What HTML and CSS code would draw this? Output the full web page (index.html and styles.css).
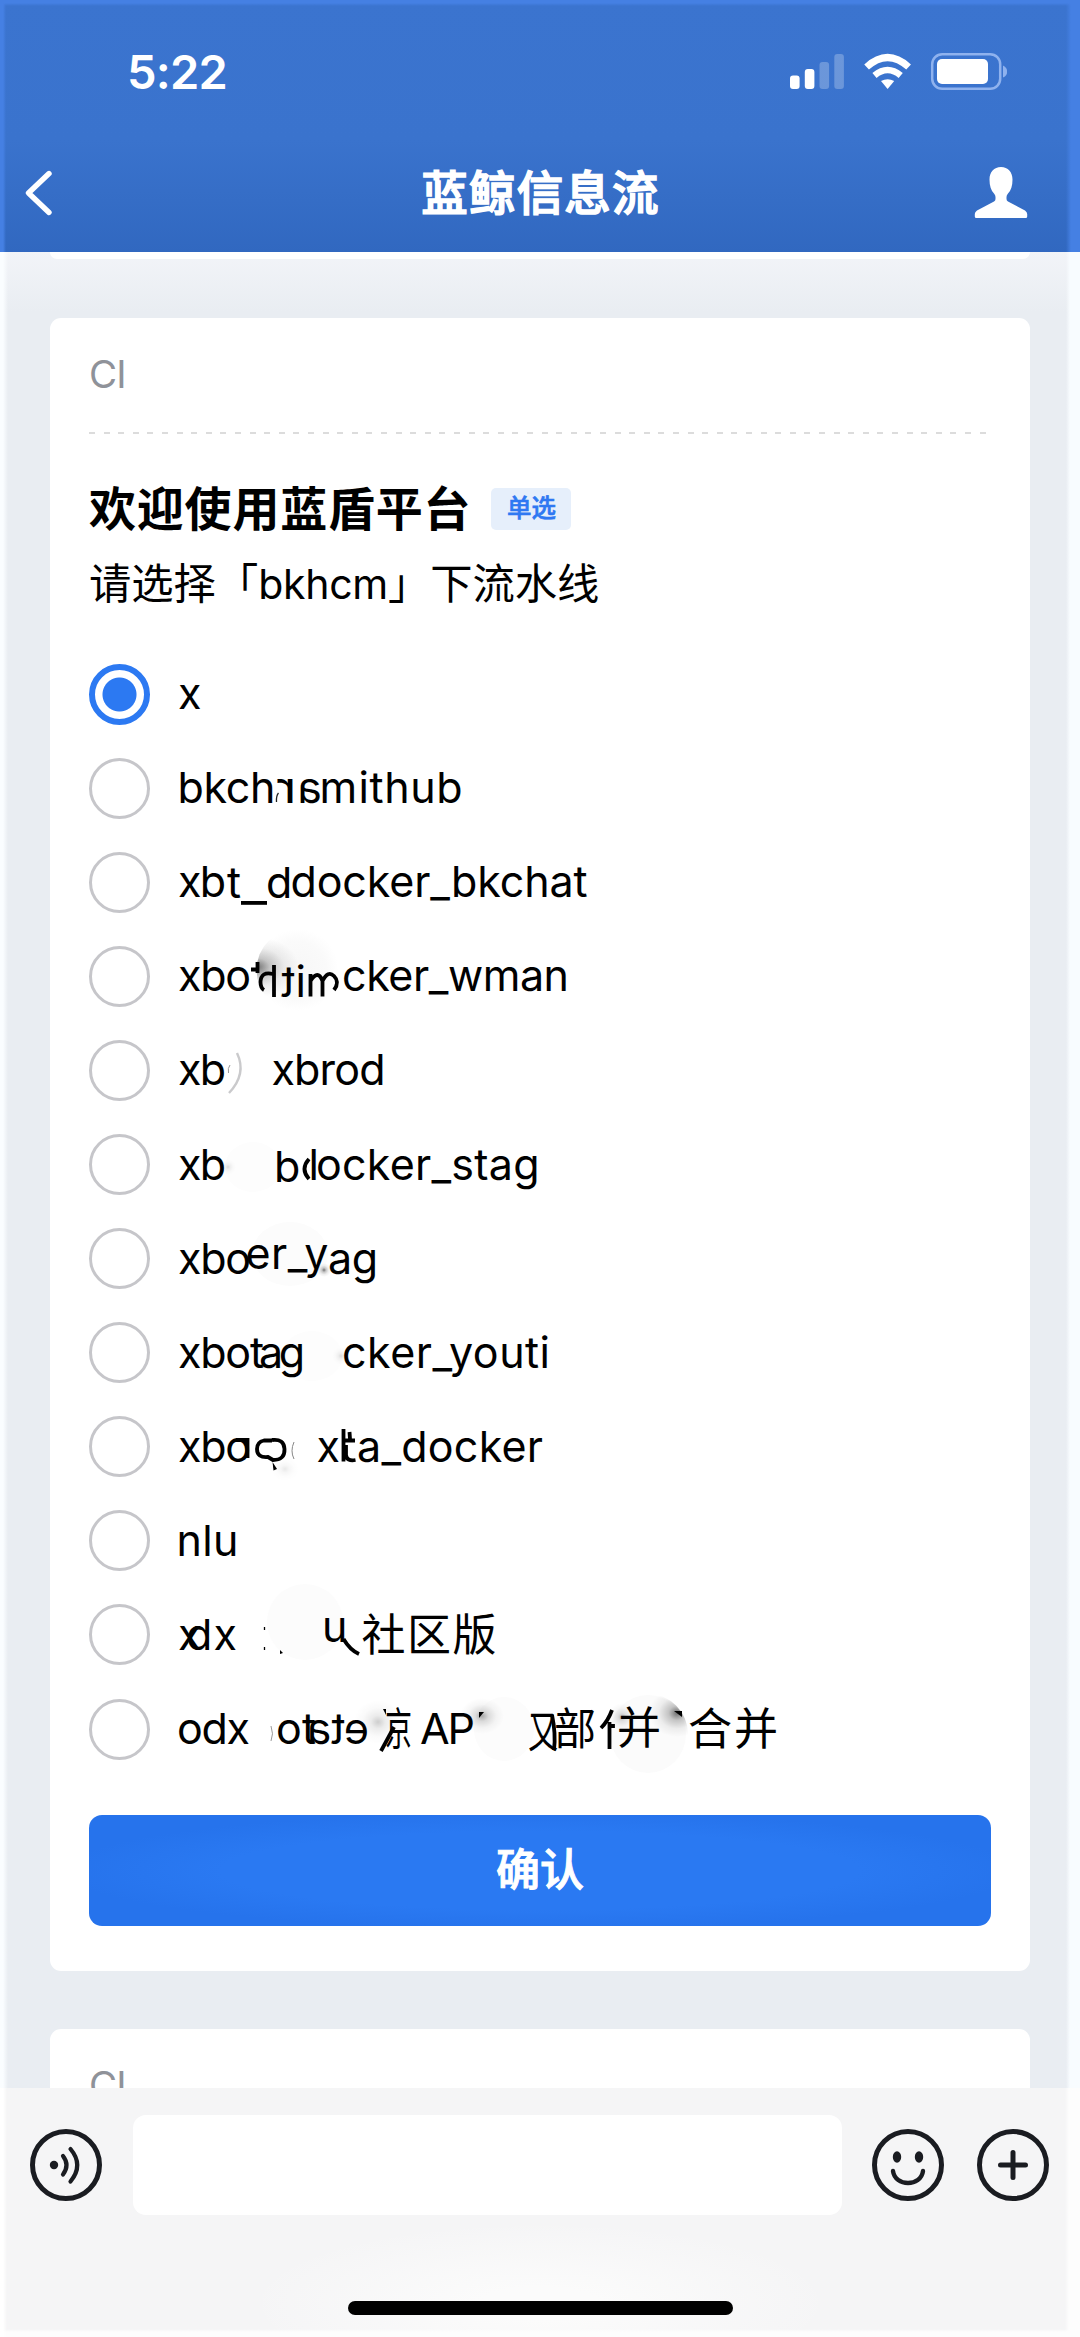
FILE: index.html
```html
<!DOCTYPE html>
<html lang="zh-CN">
<head>
<meta charset="utf-8">
<title>蓝鲸信息流</title>
<link rel="stylesheet" href="styles.css">
</head>
<body>
<div class="screen">
  <header class="header">
    <div class="status">
      <span class="clock">5:22</span>
      <svg class="status-icons" width="220" height="40" viewBox="0 0 220 40">
        <g fill="#fff">
          <rect x="2" y="23.5" width="9.6" height="13.5" rx="3"/>
          <rect x="16.8" y="17" width="9.6" height="20" rx="3"/>
          <rect x="31.5" y="10" width="9.6" height="27" rx="3" opacity=".25"/>
          <rect x="46.3" y="2" width="9.6" height="35" rx="3" opacity=".25"/>
          <path d="M93 29 Q99.600 25.500 106.200 29 L99.600 37Z"/>
        </g>
        <g fill="none" stroke="#fff" stroke-width="7">
          <path d="M78.600 15 Q99.600 -4 120.600 15" stroke-width="7"/>
          <path d="M86.500 23.500 Q99.600 12.500 112.700 23.500" stroke-width="6.500"/>
        </g>
        <rect x="144.200" y="2.200" width="68" height="34.500" rx="10" fill="none" stroke="#8fb2ee" stroke-width="2.500"/>
        <rect x="149" y="7" width="51" height="25" rx="5" fill="#fff"/>
        <path d="M215 13.500 Q219.500 16 219 19.500 Q219.500 23.500 215 25.500Z" fill="#8fb2ee"/>
      </svg>
    </div>
    <nav class="nav">
      <svg width="32" height="50" viewBox="0 0 32 50" fill="none" stroke="#fff" stroke-width="5.400" stroke-linecap="round" stroke-linejoin="round"><path d="M26 5.500 L5.500 25 L26 44.500"/></svg>
      <h1 class="nav-title">蓝鲸信息流</h1>
      <svg width="54" height="52" viewBox="0 0 54 52" fill="#fff"><path d="M27 0C34 0 38.500 5 38.500 12.500C38.500 19 37 23.500 34 26.500Q32.500 28 32.500 30V32Q32.500 33.500 34 34.500L51 43.500Q53.200 45 53.200 47V49.500Q53.200 51 51.700 51H2.300Q.8 51 .8 49.500V47Q.8 45 3 43.500L20 34.500Q21.500 33.500 21.500 32V30Q21.500 28 20 26.500C17 23.500 15.500 19 15.500 12.500C15.500 5 20 0 27 0Z"/></svg>
    </nav>
  </header>

  <main class="feed">
    <div class="card card-prev"></div>
    <section class="card card-main">
      <div class="source">CI</div>
      <div class="divider"></div>
      <div class="title-row"><h2 class="title">欢迎使用蓝盾平台</h2><span class="tag">单选</span></div>
      <p class="subtitle">请选择「<span class="latin">bkhcm</span>」下流水线</p>
      <ul class="options">
        <li class="option"><i class="radio checked"></i>
          <svg class="label"><text x="8" y="61.500">x</text></svg></li>
        <li class="option"><i class="radio"></i>
          <svg class="label">
            <text x="7.500" y="61.500" textLength="98">bkch</text>
            <text transform="translate(126.500 61.500) scale(-1.250 1)">r</text>
            <path d="M108.500 52Q106 55 106.500 61" fill="none" stroke="#222" stroke-width="1.300"/>
            <text transform="translate(151.500 61.500) scale(-1 1)">a</text>
            <text x="149.500" y="61.500">m</text>
            <text x="188.500" y="61.500" textLength="104">ithub</text>
          </svg></li>
        <li class="option"><i class="radio"></i>
          <svg class="label">
            <text x="8" y="61.500" textLength="48">xb</text>
            <text x="57" y="62.500">t</text>
            <rect class="ink" x="71" y="66" width="26" height="3.800"/>
            <text x="96" y="63">d</text>
            <text x="120.500" y="61.500" textLength="297">docker_bkchat</text>
          </svg></li>
        <li class="option"><i class="radio"></i>
          <svg class="label">
            <defs>
              <radialGradient id="smudge"><stop offset="0" stop-color="#f7f7f7"/><stop offset=".7" stop-color="#fafafa"/><stop offset="1" stop-color="#fff"/></radialGradient>
              <radialGradient id="shade"><stop offset="0" stop-color="#000" stop-opacity=".55"/><stop offset=".3" stop-color="#000" stop-opacity=".22"/><stop offset=".65" stop-color="#000" stop-opacity=".06"/><stop offset="1" stop-color="#000" stop-opacity="0"/></radialGradient>
              <clipPath id="disc"><circle cx="127.500" cy="41" r="41"/></clipPath>
              <clipPath id="disc-left"><circle cx="478" cy="52" r="40"/></clipPath>
            </defs>
            <circle cx="127.500" cy="41" r="41" fill="url(#smudge)"/>
            <ellipse cx="87" cy="38" rx="42" ry="30" fill="url(#shade)" clip-path="url(#disc)"/>
            <text x="8" y="61.500" textLength="73">xbo</text>
            <path class="stroke" d="M81 40.500H88M87.500 33V44"/>
            <path class="stroke" d="M104 36V68M103 45Q91 42 90.500 53Q90.500 59 94 61"/>
            <text transform="translate(124.500 67.500) scale(-1 1)">t</text>
            <text x="125.500" y="67.500">i</text>
            <path class="stroke" d="M140.500 67.500V45M140.500 52Q148 40 152.500 52V67.500M152.500 52Q158 41 164 47Q170 53 164 61"/>
            <text x="172" y="61.500" textLength="227">cker_wman</text>
          </svg></li>
        <li class="option"><i class="radio"></i>
          <svg class="label">
            <text x="8" y="61.500" textLength="48">xb</text>
            <path d="M67 30Q77 51 59 70" fill="none" stroke="#cacacc" stroke-width="2.400"/>
            <path d="M60 42Q57.500 45 58.500 50" fill="none" stroke="#999" stroke-width="1"/>
            <text x="101.500" y="61.500" textLength="114">xbrod</text>
          </svg></li>
        <li class="option"><i class="radio"></i>
          <svg class="label">
            <ellipse cx="83" cy="49" rx="28" ry="25" fill="#fdfdfd"/>
            <ellipse cx="58" cy="49" rx="8" ry="8" fill="url(#shade)" opacity=".25"/>
            <text x="8" y="61.500" textLength="48">xb</text>
            <text x="104" y="63.500">b</text>
            <path class="stroke" d="M139 41Q130 51 139 61"/>
            <text x="138.500" y="61.500">l</text>
            <text x="146" y="61.500" textLength="223.500">ocker_stag</text>
          </svg></li>
        <li class="option"><i class="radio"></i>
          <svg class="label">
            <ellipse cx="120" cy="42" rx="38" ry="32" fill="#fcfcfc"/>
            <ellipse cx="154" cy="58" rx="7" ry="7" fill="url(#shade)"/>
            <text x="8" y="61.500" textLength="73">xbo</text>
            <text x="75.500" y="57" textLength="83">er_y</text>
            <text x="158" y="61.500" textLength="50">ag</text>
          </svg></li>
        <li class="option"><i class="radio"></i>
          <svg class="label">
            <ellipse cx="142" cy="50" rx="30" ry="25" fill="#fdfdfd"/>
            <text x="8" y="61.500" textLength="86">xbot</text>
            <text x="89" y="61.500" textLength="46">ag</text>
            <ellipse cx="171" cy="50" rx="9" ry="9" fill="url(#shade)" opacity=".25"/>
            <text x="172" y="61.500" textLength="208">cker_youti</text>
          </svg></li>
        <li class="option"><i class="radio"></i>
          <svg class="label">
            <ellipse cx="115" cy="69" rx="14" ry="12" fill="url(#shade)" opacity=".16"/>
            <text x="8" y="61.500" textLength="73">xbo</text>
            <path class="stroke" d="M66 40H77.500V58"/>
            <path class="stroke" d="M102 40.500H94Q87 42 87 49Q87 58 98 57L103 60Q115 60 114.500 49Q114 38.500 102 40"/>
            <path class="ink" d="M102.500 62L107 69L103.500 70.500Z"/>
            <path d="M124 42Q120 51 124 59" fill="none" stroke="#888"/>
            <text x="146.500" y="61.500">x</text>
            <path class="stroke" d="M173.500 29V61.500M174 40.500H185M176 45V55Q176.500 61.500 185.500 60M179.500 32L180 39"/>
            <text x="187" y="61.500" textLength="186">a_docker</text>
          </svg></li>
        <li class="option"><i class="radio"></i>
          <svg class="label"><text x="6.500" y="61.500" textLength="62">nlu</text></svg></li>
        <li class="option"><i class="radio"></i>
          <svg class="label">
            <circle cx="135" cy="34" r="38" fill="#fcfcfc"/>
            <text x="8" y="61.500">x</text><text x="16" y="61.500">d</text><text x="43.500" y="61.500">x</text>
            <path d="M94.500 39V42M94.500 59V62" stroke="#000" stroke-width="1.300"/>
            <path class="ink" d="M110 62L113 65L110 66Z"/>
            <text x="152" y="53.500">u</text>
            <path class="stroke" d="M173.500 51Q180 62 189 66"/>
            <text class="han" x="191.500" y="63" textLength="135">社区版</text>
          </svg></li>
        <li class="option"><i class="radio"></i>
          <svg class="label">
            <ellipse cx="208" cy="40" rx="24" ry="22" fill="url(#shade)" opacity=".35"/>
            <ellipse cx="334" cy="47" rx="30" ry="32" fill="#fcfcfc"/>
            <ellipse cx="312" cy="34" rx="22" ry="18" fill="url(#shade)" opacity=".6"/>
            <ellipse cx="478" cy="52" rx="38" ry="39" fill="#fbfbfb"/>
            <ellipse cx="507" cy="31" rx="28" ry="24" fill="url(#shade)" clip-path="url(#disc-left)"/>
            <ellipse cx="452" cy="35" rx="14" ry="14" fill="url(#shade)" opacity=".5"/>
            <text x="7" y="61.500" textLength="73">odx</text>
            <path d="M101 44Q104 52 101 59" fill="none" stroke="#999"/>
            <text x="106" y="61.500">o</text><text x="132" y="61.500">t</text>
            <text transform="translate(161 61.500) scale(-1 1)">a</text>
            <text transform="translate(174.500 61.500) scale(-1 1)">t</text>
            <text transform="translate(199 61.500) scale(-1 1)">e</text>
            <path class="stroke" d="M224 45L211 69"/><path class="ink" d="M213 27H216V33Z"/>
            <text class="han" x="215" y="63" textLength="27" lengthAdjust="spacingAndGlyphs">京</text>
            <text x="250" y="61.500" textLength="55">AP</text>
            <path class="ink" d="M309 30H314L309 36Z"/>
            <text class="han" x="358" y="66" textLength="30" lengthAdjust="spacingAndGlyphs">又</text>
            <path class="stroke" d="M382 33Q386 52 384 68"/>
            <text class="han" x="384" y="63" textLength="42" lengthAdjust="spacingAndGlyphs">部</text>
            <path class="stroke" d="M442 28Q438 39 431 46M439.500 40V67M443 46V42"/>
            <text class="han" x="447" y="62">并</text>
            <path class="ink" d="M504 29H512V35Z"/>
            <text class="han" x="518" y="63" textLength="90">合并</text>
          </svg></li>
      </ul>
      <button class="confirm">确认</button>
    </section>
    <section class="card card-next"><div class="source">CI</div></section>
  </main>

  <footer class="footer">
    <div class="composer">
      <svg width="72" height="72" viewBox="0 0 72 72" fill="none" stroke="#1a1c21" stroke-width="5" stroke-linecap="round"><circle cx="36" cy="36" r="33.500"/><circle cx="24" cy="36" r="4.200" fill="#1a1c21" stroke="none"/><path stroke-width="4.200" d="M33 27Q40 36 33 45.500M40.500 20Q54 36 40.500 52.500"/></svg>
      <div class="input"></div>
      <svg class="emoji" width="72" height="72" viewBox="0 0 72 72" fill="none" stroke="#1a1c21" stroke-width="5" stroke-linecap="round"><circle cx="36" cy="36" r="33.500"/><g fill="#1a1c21" stroke="none"><ellipse cx="25" cy="28" rx="4.200" ry="5.800"/><ellipse cx="47" cy="28" rx="4.200" ry="5.800"/></g><path stroke-width="4.400" d="M21 42C23 58 49 58 51 42"/></svg>
      <svg width="72" height="72" viewBox="0 0 72 72" fill="none" stroke="#1a1c21" stroke-width="5" stroke-linecap="round"><circle cx="36" cy="36" r="33.500"/><path d="M23.500 36H48.500M36 23.500V48.500"/></svg>
    </div>
    <div class="home"></div>
  </footer>
</div>
</body>
</html>
```
FILE: styles.css
```css
* { box-sizing: border-box; margin: 0; padding: 0; }
body {
  width: 1080px; height: 2337px; overflow: hidden; color: #000;
  font-family: Inter, "Noto Sans CJK SC", sans-serif;
}
.screen { display: flex; flex-direction: column; height: 2337px; }

.header {
  height: 252px; flex: none; color: #fff;
  background:
    linear-gradient(to right, #4580e3 3px, transparent 6px, transparent 1066px, #4580e3 1071px),
    linear-gradient(#4580e3 3px, transparent 6px),
    linear-gradient(#3b74cf 0, #3a73cd 140px, #3168c0 252px);
}
.status { display: flex; justify-content: space-between; height: 141px; padding: 52px 72px 0 127px; }
.clock { font-size: 47px; line-height: 40px; font-weight: 600; letter-spacing: -0.8px; }
.nav { display: flex; align-items: center; justify-content: space-between; height: 100px; padding: 3px 52px 0 23px; }
.nav-title { font-size: 46.500px; line-height: 60px; font-weight: 500; letter-spacing: 1.2px; margin-left: 52px; -webkit-text-stroke: 1.5px #fff; }

.feed {
  height: 1836px; flex: none; overflow: hidden; padding: 0 50px;
  background:
    linear-gradient(to right, #fafdff 3px, transparent 8px, transparent 1066px, #f8fcff 1070px),
    linear-gradient(#f2f4f8, #e9edf2 60px);
}
.card { background: #fff; border-radius: 11px; }
.card-prev { height: 7px; border-radius: 0 0 11px 11px; }
.card-main { height: 1653px; margin-top: 59px; padding: 0 39px; }
.card-next { height: 200px; margin-top: 58px; padding: 0 39px; }
.source { height: 114px; line-height: 113px; font-size: 38.5px; font-weight: 400; color: #8f9299; letter-spacing: -0.8px; }
.divider { height: 2px; width: 897px; background: repeating-linear-gradient(to right, #dcdcdc 0 6px, transparent 6px 14.6px); }
.title-row { display: flex; align-items: center; height: 60px; margin-top: 45px; }
.title { font-size: 47px; line-height: 60px; font-weight: 700; letter-spacing: 0.8px; }
.tag {
  width: 80px; height: 42px; margin-left: 20px; border-radius: 5px; text-align: center;
  background: #e6effb; color: #2f78f2; font-size: 24.5px; line-height: 41px; font-weight: 500;
  -webkit-text-stroke: 0.6px #2f78f2;
}
.subtitle { margin-top: 15px; height: 60px; line-height: 60px; font-size: 42.3px; font-weight: 400; white-space: nowrap; }
.latin { font-size: 41px; letter-spacing: -0.3px; }

.options { list-style: none; margin-top: 33px; }
.option { display: flex; align-items: center; height: 94.1px; }
.radio { width: 61px; height: 61px; border-radius: 50%; border: 3px solid #c6c6ca; flex: none; }
.radio.checked { border: 6px solid #2c79f2; background: radial-gradient(circle, #2c79f2 16.5px, #fff 17.5px); }
.label { width: 620px; height: 94px; margin-left: 20px; overflow: visible; font-size: 43px; }
.han { font-size: 44px; }
.ink { fill: #000; }
.stroke { fill: none; stroke: #000; stroke-width: 3.8px; }

.confirm {
  display: block; width: 902px; height: 111px; margin-top: 38.8px; border: 0; border-radius: 13px;
  background: radial-gradient(ellipse at center, #2a79f2 50%, #2673ec 75%); color: #fff;
  font: 500 44px/109px Inter, "Noto Sans CJK SC", sans-serif;
  -webkit-text-stroke: 1px #fff;
}

.footer {
  height: 249px; flex: none; padding-top: 27px;
  background:
    linear-gradient(to right, #fff 3px, transparent 7px, transparent 1065px, #fdfdfd 1069px),
    linear-gradient(to top, #fdfdfd 5px, transparent 8px),
    radial-gradient(ellipse 290px 80px at 540px 215px, #fbfbfb 20%, transparent),
    #f5f5f6;
}
.composer { display: flex; align-items: center; height: 100px; padding: 0 30px; }
.input { width: 709px; height: 100px; margin-left: 31px; border-radius: 13px; background: #fff; }
.emoji { margin: 0 33px 0 30px; }
.home { width: 385px; height: 14px; margin: 86px 0 0 348px; border-radius: 7px; background: #000; }
```
